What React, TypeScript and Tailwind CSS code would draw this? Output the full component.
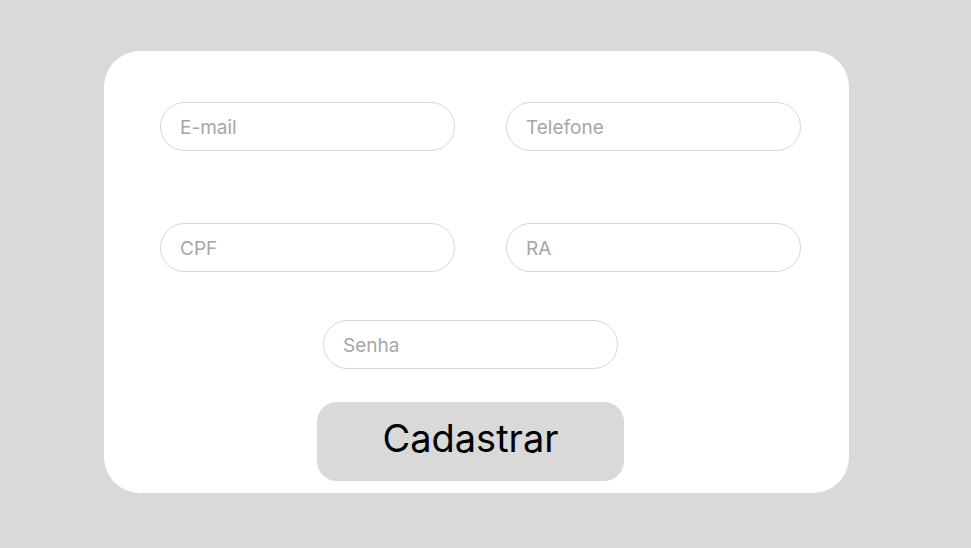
export default function App() {
  const fieldClass =
    "h-[49px] w-[295px] rounded-full border border-[#d6d6d6] bg-white pl-[19px] pr-5 pt-[2px] text-[19px] text-[#333] placeholder:text-[#a6a6a6] outline-none"

  return (
    <div className="min-h-[548px] w-full bg-[#d9d9d9] pt-[51px] pl-[104px] font-['Inter',sans-serif]">
      <div className="flex h-[442px] w-[745px] flex-col rounded-[36px] bg-white pt-[51px]">
        {/* linha 1 e 2 */}
        <div className="grid grid-cols-[295px_295px] gap-x-[51px] gap-y-[72px] pl-[56px]">
          <input className={fieldClass} placeholder="E-mail" />
          <input className={fieldClass} placeholder="Telefone" />
          <input className={fieldClass} placeholder="CPF" />
          <input className={fieldClass} placeholder="RA" />
        </div>

        <div className="mt-[48px] pl-[219px]">
          <input className={fieldClass} type="password" placeholder="Senha" />
        </div>

        <div className="mt-[33px] pl-[213px]">
          <button className="h-[79px] w-[307px] rounded-[20px] bg-[#d9d9d9] pb-[7px] text-[38px] leading-none text-black">
            Cadastrar
          </button>
        </div>
      </div>
    </div>
  )
}
